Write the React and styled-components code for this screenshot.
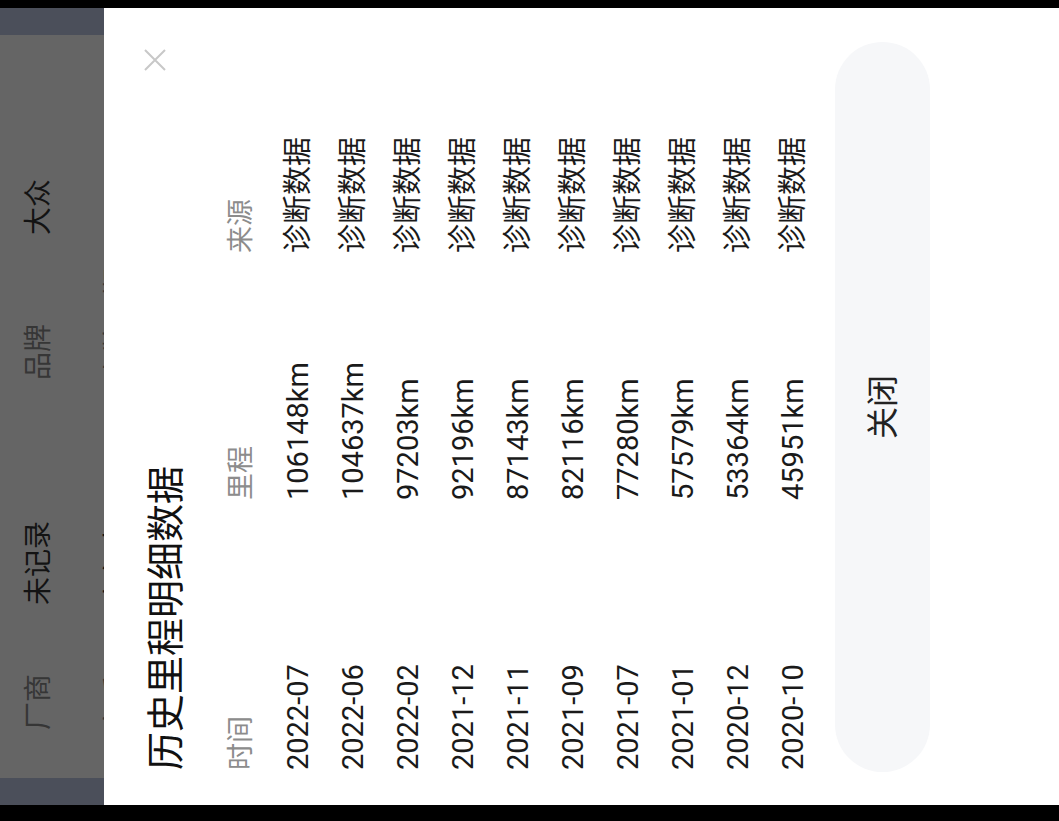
import React from 'react';
import styled, { createGlobalStyle } from 'styled-components';

const GlobalStyle = createGlobalStyle`
  html, body {
    margin: 0;
    padding: 0;
    background: #000;
    overflow: hidden;
  }
  * {
    box-sizing: border-box;
  }
  body {
    font-family: Roboto, "Noto Sans CJK SC", sans-serif;
  }
`

const Screen = styled.div`
  width: 1059px;
  height: 821px;
  overflow: hidden;
  background: #000;
`

// the phone was held sideways: build the portrait page, then turn it
const Phone = styled.div`
  width: 821px;
  height: 1059px;
  padding: 0 8px 0 16px;
  display: flex;
  flex-direction: column;
  background: #000;
  transform-origin: 0 0;
  transform: translateY(821px) rotate(-90deg);
`

const Backdrop = styled.div`
  height: 104px;
  flex-shrink: 0;
  overflow: hidden;
  background: #656565;
  border-left: 27px solid #4b4f5a;
  border-right: 27px solid #4b4f5a;
  padding: 19px 0 0 48px;
  display: flex;
  flex-direction: column;
  gap: 39px;
`

const InfoRow = styled.div`
  display: grid;
  grid-template-columns: 125px 225px 145px 1fr;
  font-size: 28px;
  line-height: 40px;
  white-space: nowrap;
`

const InfoLabel = styled.span`
  color: #363636;
`

const InfoValue = styled.span`
  color: #131313;
`

const Sheet = styled.div`
  flex: 1;
  background: #fff;
  display: flex;
  flex-direction: column;
  padding: 0 34px;
`

const SheetHead = styled.div`
  display: flex;
  justify-content: space-between;
  align-items: flex-start;
  padding: 30px 6px 16px 1px;
`

const Title = styled.h2`
  margin: 0;
  font-size: 38px;
  line-height: 64px;
  font-weight: 400;
  color: #111;
`

const CloseIcon = styled.button`
  margin-top: 9px;
  width: 24px;
  height: 24px;
  padding: 0;
  border: 0;
  background: none;
  color: #c8c8c8;
  display: flex;
`

const Table = styled.div`
  padding-left: 1px;
`

const Row = styled.div`
  display: grid;
  grid-template-columns: 270px 247px 1fr;
  height: ${p => (p.$head ? 57 : 55)}px;
  line-height: 55px;
  font-size: ${p => (p.$head ? 27 : 29)}px;
  color: ${p => (p.$head ? '#8c8c8c' : '#1a1a1a')};
  white-space: nowrap;
`

const CloseBar = styled.button`
  margin: 14px 0 0 -1px;
  height: 95px;
  padding: 0 0 6px;
  border: 0;
  border-radius: 48px;
  background: #f6f7f9;
  font-family: inherit;
  font-size: 32px;
  color: #222;
`

const records = [
  ['2022-07', '106148km'],
  ['2022-06', '104637km'],
  ['2022-02', '97203km'],
  ['2021-12', '92196km'],
  ['2021-11', '87143km'],
  ['2021-09', '82116km'],
  ['2021-07', '77280km'],
  ['2021-01', '57579km'],
  ['2020-12', '53364km'],
  ['2020-10', '45951km'],
]

export default function App() {
  return (
    <Screen>
      <GlobalStyle />
      <Phone>
        <Backdrop>
          <InfoRow>
            <InfoLabel>厂商</InfoLabel>
            <InfoValue>未记录</InfoValue>
            <InfoLabel>品牌</InfoLabel>
            <InfoValue>大众</InfoValue>
          </InfoRow>
          <InfoRow>
            <InfoLabel>车系</InfoLabel>
            <InfoValue>高尔夫</InfoValue>
            <InfoLabel>上牌日期</InfoLabel>
            <InfoValue>2017-09</InfoValue>
          </InfoRow>
        </Backdrop>
        <Sheet>
          <SheetHead>
            <Title>历史里程明细数据</Title>
            <CloseIcon aria-label="关闭">
              <svg width="24" height="24" viewBox="0 0 24 24" fill="none" stroke="currentColor" strokeWidth="2">
                <path d="M2 2L22 22M22 2L2 22" />
              </svg>
            </CloseIcon>
          </SheetHead>
          <Table>
            <Row $head>
              <span>时间</span>
              <span>里程</span>
              <span>来源</span>
            </Row>
            {records.map(([date, km]) => (
              <Row key={date}>
                <span>{date}</span>
                <span>{km}</span>
                <span>诊断数据</span>
              </Row>
            ))}
          </Table>
          <CloseBar>关闭</CloseBar>
        </Sheet>
      </Phone>
    </Screen>
  )
}
